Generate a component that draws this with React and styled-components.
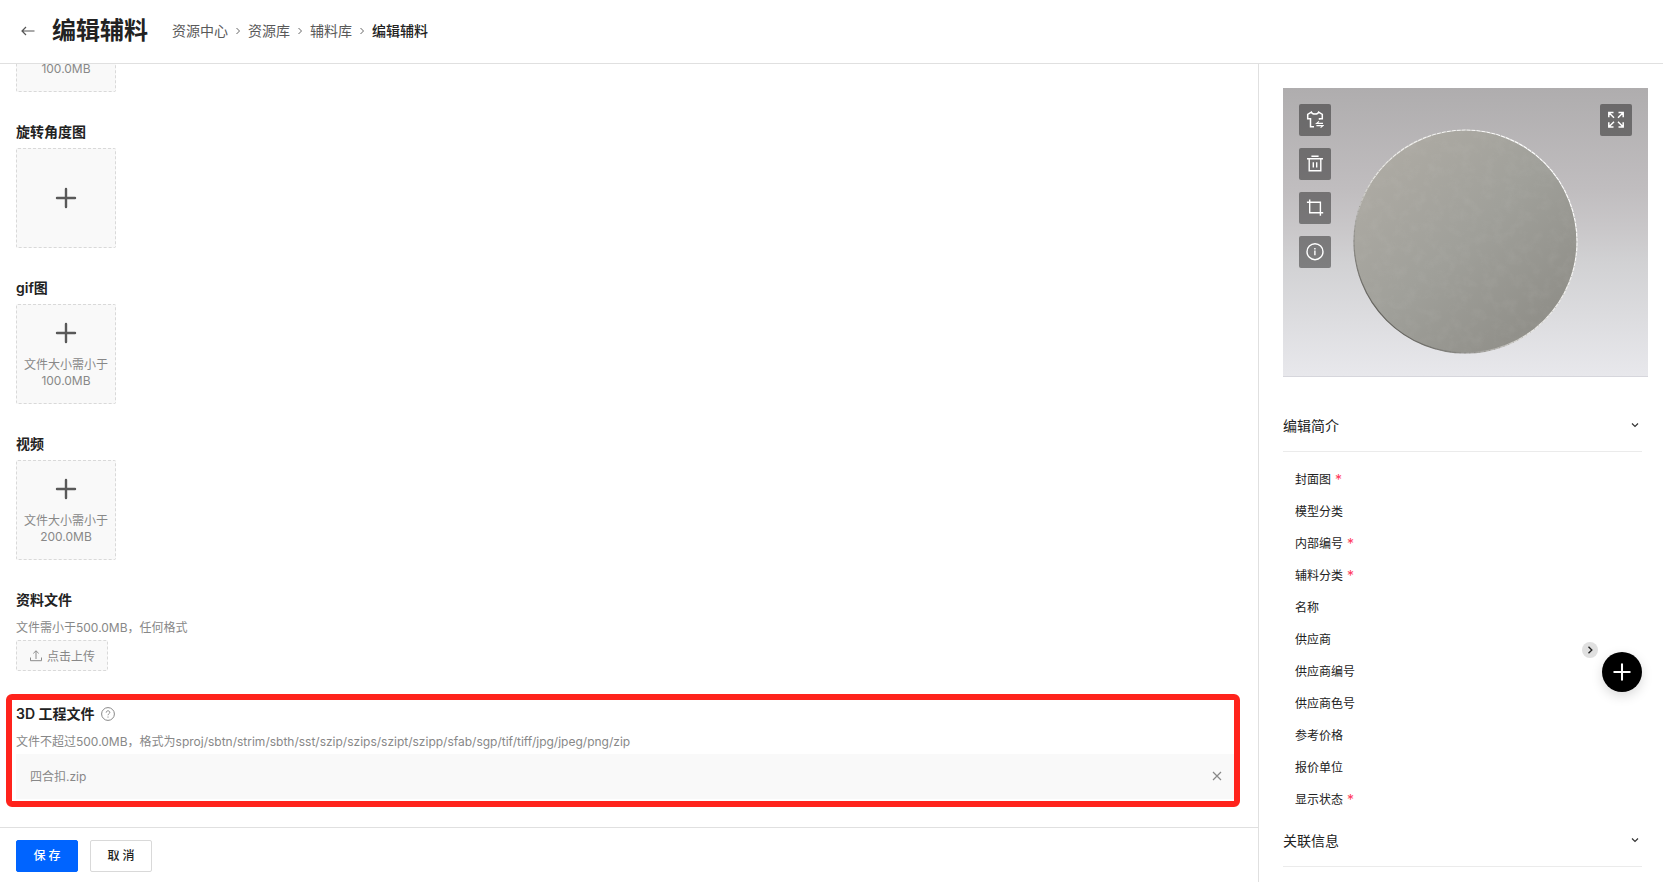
import React from 'react';
import styled, { createGlobalStyle } from 'styled-components';

const crumbs = ['资源中心', '资源库', '辅料库'];

const uploads = [
  { title: '旋转角度图' },
  { title: 'gif图', limit: '100.0MB' },
  { title: '视频', limit: '200.0MB' },
];

const fields = [
  { label: '封面图', required: true },
  { label: '模型分类' },
  { label: '内部编号', required: true },
  { label: '辅料分类', required: true },
  { label: '名称' },
  { label: '供应商' },
  { label: '供应商编号' },
  { label: '供应商色号' },
  { label: '参考价格' },
  { label: '报价单位' },
  { label: '显示状态', required: true },
];

/* ---------- icons ---------- */

const BackIcon = () => (
  <svg width="14" height="14" viewBox="0 0 14 14" fill="none" stroke="#555" strokeWidth="1.2">
    <path d="M13.5 7H1M5 3L1 7l4 4" />
  </svg>
);

const CrumbArrow = () => (
  <svg width="4" height="8" viewBox="0 0 4 8" fill="none" stroke="#666" strokeWidth="1">
    <path d="M.5 1l3 3-3 3" />
  </svg>
);

const PlusIcon = ({ size = 28, color = '#595959', weight = 2.4 }) => (
  <svg width={size} height={size} viewBox="0 0 28 28" fill="none" stroke={color} strokeWidth={weight} strokeLinecap="round">
    <path d="M14 5v18M5 14h18" />
  </svg>
);

const UploadIcon = () => (
  <svg width="12" height="12" viewBox="0 0 12 12" fill="none" stroke="#8c8c8c" strokeWidth="1">
    <path d="M6 9V.9M3.3 3.4L6 .8l2.7 2.6M.5 7.5v3.2h11V7.5" />
  </svg>
);

const HelpIcon = () => (
  <svg width="14" height="14" viewBox="0 0 14 14" fill="none" stroke="#888" strokeWidth="1">
    <circle cx="7" cy="7" r="6.4" />
    <path d="M5.2 5.6c0-1.1.8-1.8 1.8-1.8s1.8.7 1.8 1.6c0 1.3-1.8 1.4-1.8 2.8M7 9.5v1.1" />
  </svg>
);

const CloseIcon = () => (
  <svg width="10" height="10" viewBox="0 0 10 10" fill="none" stroke="#888" strokeWidth="1.2">
    <path d="M1 1l8 8M9 1L1 9" />
  </svg>
);

const ChevronDown = () => (
  <svg width="8" height="8" viewBox="0 0 8 8" fill="none" stroke="#333" strokeWidth="1.2">
    <path d="M1 2.5l3 3 3-3" />
  </svg>
);

const ChevronRight = () => (
  <svg width="8" height="8" viewBox="0 0 8 8" fill="none" stroke="#222" strokeWidth="1.4">
    <path d="M2.5 .8L5.8 4 2.5 7.2" />
  </svg>
);

const iconProps = {
  width: 18,
  height: 18,
  viewBox: '0 0 18 18',
  fill: 'none',
  stroke: '#fff',
  strokeWidth: 1.4,
};

const ShirtIcon = () => (
  <svg {...iconProps} strokeWidth="1.5">
    <path d="M8 15.8H4.5V7.8H1.7V3.4L5.4 1.2c.4 1.1 1.6 1.8 3.6 1.8s3.2-.7 3.6-1.8l3.7 2.2v4.4h-2.8v1" />
    <path d="M17 12.4H10.6L13 10.4M10.4 14.6H17L14.6 16.6" strokeWidth="1.1" />
  </svg>
);

const TrashIcon = () => (
  <svg {...iconProps}>
    <path d="M5.4 1.2h7.2M1 3.7h16M3.2 3.7v12.1h11.6V3.7M7.3 7.2v5.2M10.7 7.2v5.2" />
  </svg>
);

const CropIcon = () => (
  <svg {...iconProps}>
    <path d="M3.7 .4v13.4h13.5M.9 3.2h13.5v13.6" />
  </svg>
);

const InfoIcon = () => (
  <svg {...iconProps}>
    <circle cx="9" cy="8.7" r="8" />
    <path d="M8.9 7.4v4.8M8.9 5v1.4" />
  </svg>
);

const ExpandIcon = () => (
  <svg {...iconProps} strokeWidth="1.5">
    <path d="M1.8 6.3V1.6h4.7M2 1.8l5 5M11.5 1.6h4.7v4.7M16 1.8l-5 5M1.8 11.3V16h4.7M2 15.8l5-5M16.2 11.3V16h-4.7M16 15.8l-5-5" />
  </svg>
);

const ButtonModel = () => (
  <svg width="100%" viewBox="0 0 365 289" display="block">
    <defs>
      <linearGradient id="backdrop" x1="0" y1="0" x2="0" y2="1">
        <stop offset="0" stopColor="#afadae" />
        <stop offset="0.35" stopColor="#c0bdbf" />
        <stop offset="0.5" stopColor="#cac8ca" />
        <stop offset="0.6" stopColor="#d1d1d3" />
        <stop offset="1" stopColor="#e8e8ec" />
      </linearGradient>
      <linearGradient id="metal" x1="0.1" y1="0.1" x2="0.85" y2="0.9">
        <stop offset="0" stopColor="#aeaba4" />
        <stop offset="0.5" stopColor="#a0a09a" />
        <stop offset="1" stopColor="#8f8e88" />
      </linearGradient>
      <linearGradient id="rim" x1="0.9" y1="0.2" x2="0.2" y2="0.9">
        <stop offset="0" stopColor="#fff" />
        <stop offset="0.6" stopColor="#e6e5e1" />
        <stop offset="1" stopColor="#65645f" />
      </linearGradient>
      <filter id="scuffs" x="0" y="0" width="1" height="1">
        <feTurbulence type="fractalNoise" baseFrequency="0.09" numOctaves="4" seed="6" />
        <feColorMatrix values="0 0 0 0 0.72  0 0 0 0 0.71  0 0 0 0 0.69  1.4 0 0 0 -0.6" />
        <feComposite in2="SourceGraphic" operator="in" />
      </filter>
    </defs>
    <rect width="365" height="289" fill="url(#backdrop)" />
    <rect y="288" width="365" height="1" fill="#d6d6dc" />
    <circle cx="182.5" cy="153.5" r="111.5" fill="url(#metal)" />
    <circle cx="182.5" cy="153.5" r="111" filter="url(#scuffs)" opacity="0.1" />
    <circle cx="182.5" cy="153.5" r="111.5" fill="none" stroke="url(#rim)" strokeWidth="1.2" />
    <circle cx="182.5" cy="153.5" r="111.5" fill="none" stroke="#777670" strokeWidth="1" strokeDasharray="1 4" opacity="0.5" />
  </svg>
);

/* ---------- page ---------- */

const App = () => {
  return (
    <Page>
      <GlobalStyle />
      <Header>
        <BackButton type="button" aria-label="返回"><BackIcon /></BackButton>
        <PageTitle>编辑辅料</PageTitle>
        <Breadcrumb>
          {crumbs.map((name) => (
            <React.Fragment key={name}>
              <a href="#">{name}</a>
              <CrumbArrow />
            </React.Fragment>
          ))}
          <strong>编辑辅料</strong>
        </Breadcrumb>
      </Header>

      <Body>
        <Main>
          <Scroller>
            <Content>
              <UploadTile type="button" aria-label="上传图片">
                <PlusIcon />
                <span>文件大小需小于100.0MB</span>
              </UploadTile>

              {uploads.map((item) => (
                <section key={item.title}>
                  <SectionTitle>{item.title}</SectionTitle>
                  <UploadTile type="button" aria-label={item.title}>
                    <PlusIcon />
                    {item.limit && <span>文件大小需小于{item.limit}</span>}
                  </UploadTile>
                </section>
              ))}

              <section>
                <SectionTitle>资料文件</SectionTitle>
                <Hint>文件需小于500.0MB，任何格式</Hint>
                <UploadRow>
                  <UploadButton type="button"><UploadIcon />点击上传</UploadButton>
                </UploadRow>
              </section>

              <ProjectSection>
                <SectionTitle>3D 工程文件 <HelpIcon /></SectionTitle>
                <Hint>文件不超过500.0MB，格式为sproj/sbtn/strim/sbth/sst/szip/szips/szipt/szipp/sfab/sgp/tif/tiff/jpg/jpeg/png/zip</Hint>
                <FileRow>
                  四合扣.zip
                  <IconButton type="button" aria-label="删除文件"><CloseIcon /></IconButton>
                </FileRow>
                <Highlight />
              </ProjectSection>
            </Content>
          </Scroller>

          <Footer>
            <ActionButton type="button" $primary>保 存</ActionButton>
            <ActionButton type="button">取 消</ActionButton>
          </Footer>
        </Main>

        <Sidebar>
          <Preview>
            <ButtonModel />
            <Tools>
              <ToolButton type="button" aria-label="替换模型"><ShirtIcon /></ToolButton>
              <ToolButton type="button" aria-label="删除"><TrashIcon /></ToolButton>
              <ToolButton type="button" aria-label="裁剪"><CropIcon /></ToolButton>
              <ToolButton type="button" aria-label="信息"><InfoIcon /></ToolButton>
            </Tools>
            <Tools $right>
              <ToolButton type="button" aria-label="全屏"><ExpandIcon /></ToolButton>
            </Tools>
          </Preview>

          <Panel>
            <PanelHeader type="button">编辑简介<ChevronDown /></PanelHeader>
            <FieldList>
              {fields.map((field) => (
                <li key={field.label}>
                  {field.label}
                  {field.required && <Required>*</Required>}
                </li>
              ))}
            </FieldList>
            <PanelHeader type="button">关联信息<ChevronDown /></PanelHeader>
          </Panel>
        </Sidebar>
      </Body>

      <Floating>
        <CollapseButton type="button" aria-label="收起"><ChevronRight /></CollapseButton>
        <AddButton type="button" aria-label="新增"><PlusIcon size={24} color="#fff" /></AddButton>
      </Floating>
    </Page>
  );
};

// --- styles ---

const GlobalStyle = createGlobalStyle`
  * {
    box-sizing: border-box;
  }
  body {
    margin: 0;
    background: #fff;
    color: #222;
    font-family: Inter, "Noto Sans CJK SC", sans-serif;
    font-size: 12px;
  }
  button {
    font: inherit;
    color: inherit;
    padding: 0;
    border: 0;
    background: none;
    cursor: pointer;
  }
  svg {
    flex-shrink: 0;
  }
`;

const Page = styled.div`
  height: 100vh;
  display: flex;
  flex-direction: column;
  overflow: hidden;
`;

const Header = styled.header`
  flex: none;
  height: 64px;
  padding: 0 21px 2px;
  display: flex;
  align-items: center;
  border-bottom: 1px solid #e0e0e0;
`;

const BackButton = styled.button`
  width: 14px;
  height: 14px;
  margin-right: 17px;
  display: flex;
`;

const PageTitle = styled.h1`
  margin: 0 24px 0 0;
  font-size: 24px;
  line-height: 32px;
  font-weight: 700;
`;

const Breadcrumb = styled.nav`
  display: flex;
  align-items: center;
  gap: 8px;
  font-size: 14px;
  line-height: 20px;

  a {
    color: #595959;
    text-decoration: none;
  }
  strong {
    font-weight: 500;
  }
`;

const Body = styled.div`
  flex: 1;
  min-height: 0;
  display: flex;
`;

const Main = styled.main`
  flex: 1;
  min-width: 0;
  display: flex;
  flex-direction: column;
`;

/* column-reverse keeps the list scrolled to its end */
const Scroller = styled.div`
  flex: 1;
  min-height: 0;
  display: flex;
  flex-direction: column-reverse;
  overflow-y: auto;
  scrollbar-width: none;
`;

const Content = styled.div`
  flex: none;
  display: flex;
  flex-direction: column;
  gap: 24px;
  padding: 24px 24px 28px 16px;
`;

const SectionTitle = styled.h3`
  margin: 0;
  display: flex;
  align-items: center;
  gap: 6px;
  font-size: 14px;
  line-height: 32px;
  font-weight: 600;
`;

const UploadTile = styled.button`
  width: 100px;
  height: 100px;
  display: flex;
  flex-direction: column;
  align-items: center;
  justify-content: center;
  gap: 10px;
  border: 1px dashed #d9d9d9;
  border-radius: 2px;
  background: #f9f9f9;
  color: #888;

  span {
    width: 84px;
    line-height: 16px;
  }
`;

const Hint = styled.p`
  margin: 0;
  line-height: 24px;
  color: #888;
`;

const UploadRow = styled.div`
  height: 34px;
`;

const UploadButton = styled.button`
  height: 31px;
  padding: 0 12px 0 13px;
  display: flex;
  align-items: center;
  gap: 5px;
  border: 1px dashed #d9d9d9;
  border-radius: 2px;
  background: #f9f9f9;
  color: #888;
`;

const ProjectSection = styled.section`
  position: relative;
`;

const Highlight = styled.div`
  position: absolute;
  inset: -4px -6px -8px -10px;
  border: 6px solid #ff231c;
  border-radius: 6px;
  pointer-events: none;
`;

const FileRow = styled.div`
  height: 45px;
  padding: 0 12px 2px 14px;
  display: flex;
  align-items: center;
  justify-content: space-between;
  background: #f9f9f9;
  color: #888;
`;

const IconButton = styled.button`
  width: 10px;
  height: 10px;
  display: flex;
`;

const Footer = styled.footer`
  flex: none;
  height: 55px;
  padding: 12px 16px;
  display: flex;
  gap: 12px;
  border-top: 1px solid #e0e0e0;
`;

const ActionButton = styled.button`
  width: 62px;
  height: 32px;
  padding-bottom: 4px;
  border: 1px solid ${(p) => (p.$primary ? '#0064ff' : '#d9d9d9')};
  border-radius: 2px;
  background: ${(p) => (p.$primary ? '#0064ff' : '#fff')};
  color: ${(p) => (p.$primary ? '#fff' : '#222')};
  font-weight: 500;
`;

const Sidebar = styled.aside`
  flex: none;
  width: 405px;
  padding: 24px 15px 0 24px;
  border-left: 1px solid #e0e0e0;
  overflow-y: auto;
  scrollbar-width: none;
`;

const Preview = styled.div`
  position: relative;
`;

const Tools = styled.div`
  position: absolute;
  top: 16px;
  ${(p) => (p.$right ? 'right: 16px;' : 'left: 16px;')}
  display: flex;
  flex-direction: column;
  gap: 12px;
`;

const ToolButton = styled.button`
  width: 32px;
  height: 32px;
  display: flex;
  align-items: center;
  justify-content: center;
  border-radius: 2px;
  background: rgba(0, 0, 0, 0.4);
`;

const Panel = styled.div`
  margin: 24px 6px 0 0;
`;

const PanelHeader = styled.button`
  width: 100%;
  height: 51px;
  padding: 0 3px 2px 0;
  display: flex;
  align-items: center;
  justify-content: space-between;
  border-bottom: 1px solid #ebebeb;
  font-size: 14px;
`;

const FieldList = styled.ul`
  margin: 0;
  padding: 12px 12px 0;
  list-style: none;

  li {
    display: flex;
    gap: 4px;
    line-height: 32px;
  }
`;

const Required = styled.span`
  color: #ff3b5c;
  font-size: 14px;
`;

const Floating = styled.div`
  position: fixed;
  right: 21px;
  bottom: 190px;
  display: flex;
  gap: 4px;
`;

const CollapseButton = styled.button`
  width: 16px;
  height: 16px;
  margin-top: -10px;
  display: flex;
  align-items: center;
  justify-content: center;
  border-radius: 50%;
  background: #e0e0e0;
`;

const AddButton = styled.button`
  width: 40px;
  height: 40px;
  display: flex;
  align-items: center;
  justify-content: center;
  border-radius: 50%;
  background: #000;
  box-shadow: 0 4px 12px rgba(0, 0, 0, 0.15);
`;

export default App;
